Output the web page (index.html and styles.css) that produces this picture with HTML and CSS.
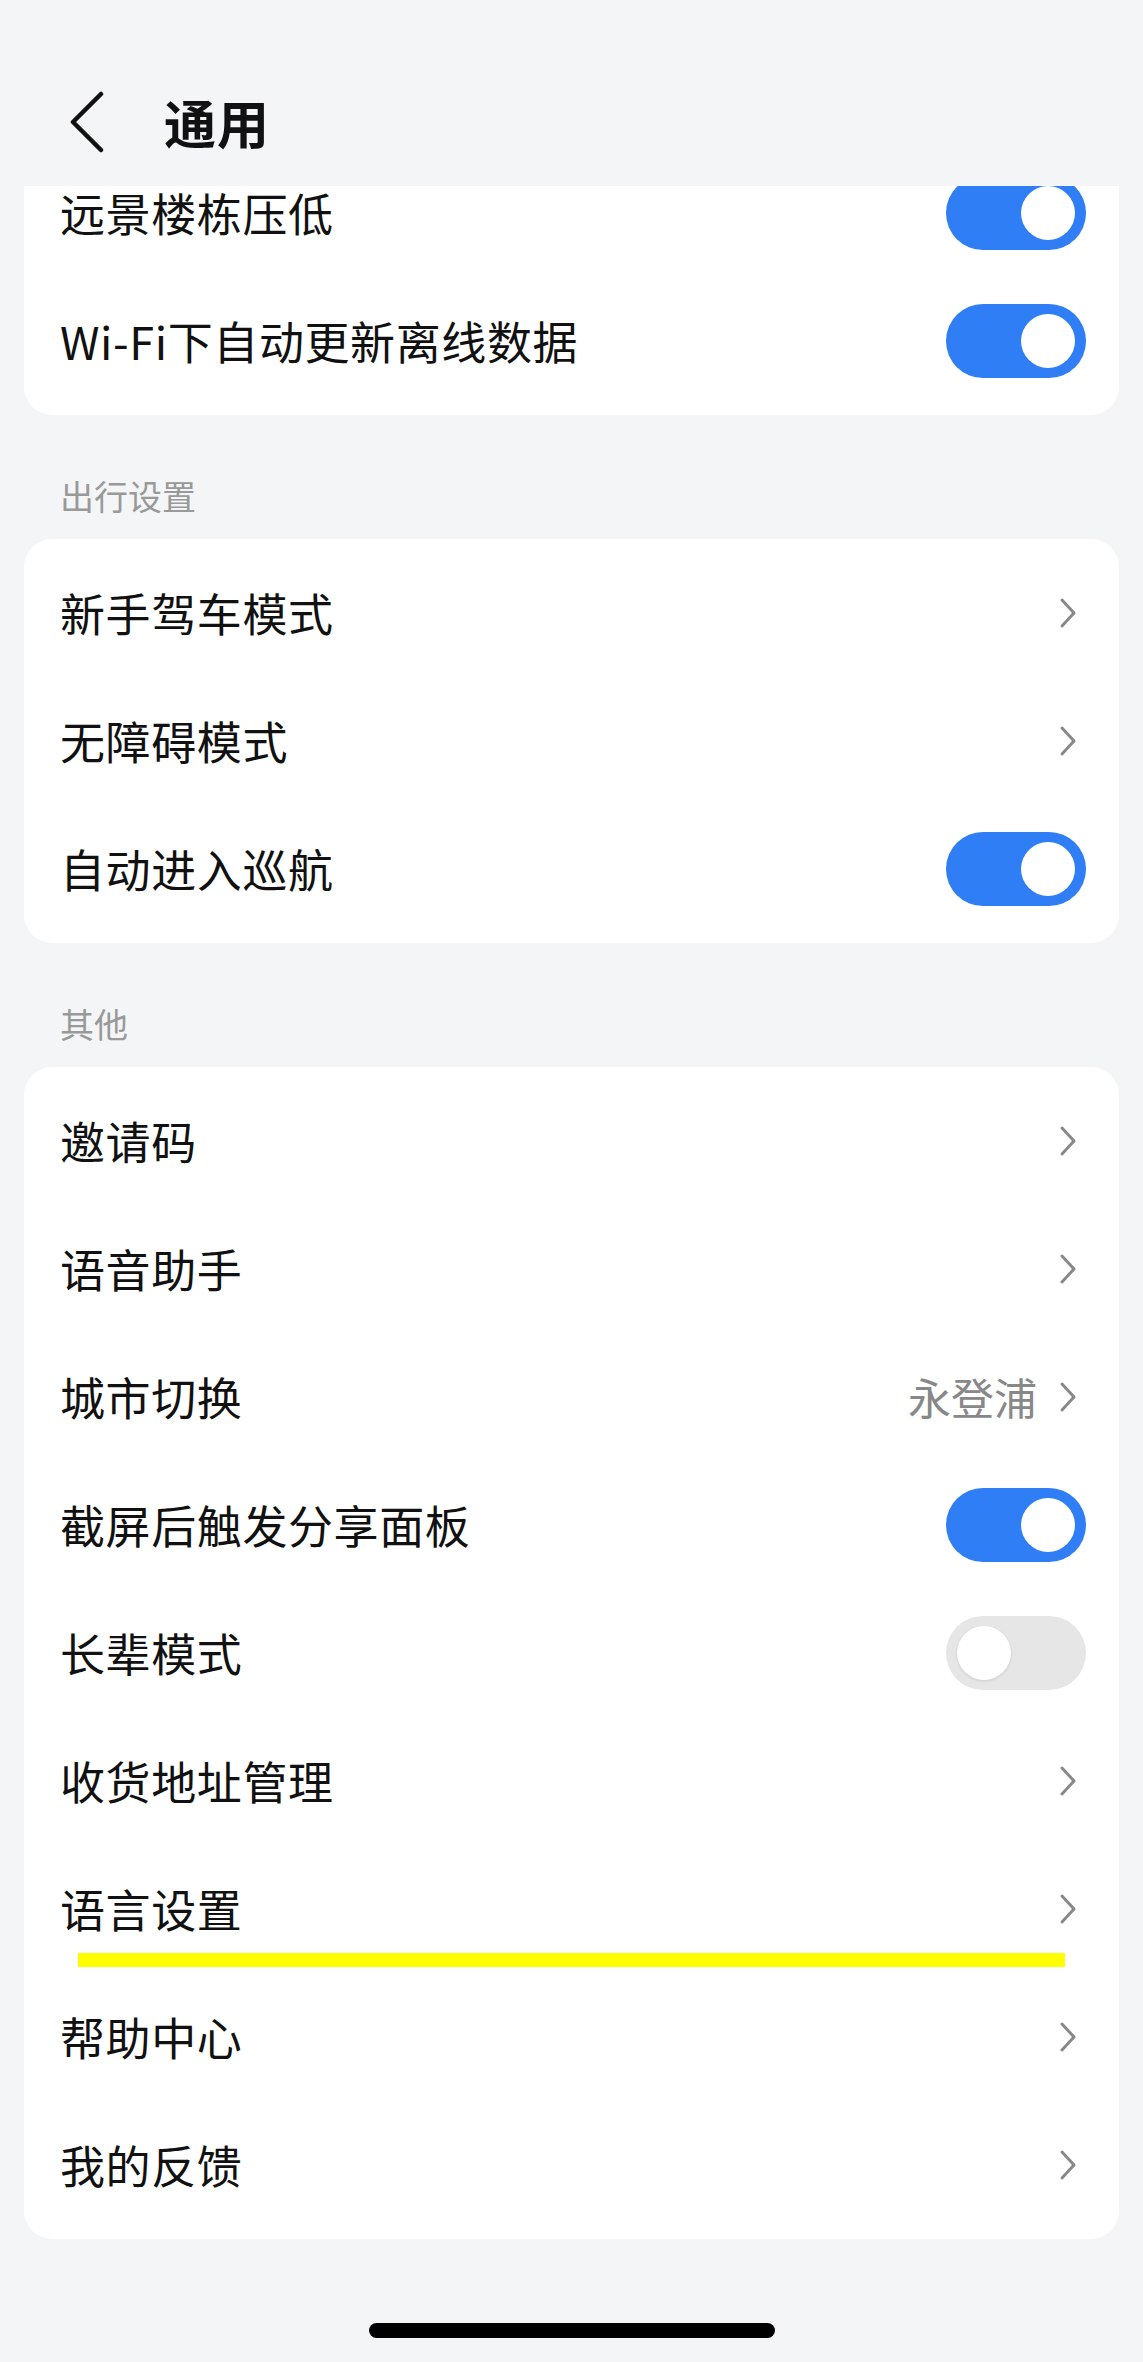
FILE: index.html
```html
<!DOCTYPE html>
<html lang="zh-CN">
<head>
    <meta charset="UTF-8">
    <meta name="viewport" content="width=device-width, initial-scale=1.0">
    <title>通用</title>
    <link rel="stylesheet" href="styles.css">
</head>
<body>
    <div class="screen">
        <!-- Top bar -->
        <div class="top-bar">
            <svg class="back-icon" width="40" height="62" viewBox="0 0 40 62">
                <path d="M33 3 L5 31 L33 59" fill="none" stroke="#111" stroke-width="4.5" stroke-linecap="round" stroke-linejoin="round"/>
            </svg>
            <h1 class="page-title">通用</h1>
        </div>

        <!-- Scrolled content -->
        <div class="content">
            <div class="content-inner">
                <div class="card">
                    <div class="row">
                        <span class="row-label">远景楼栋压低</span>
                        <span class="switch on"><span class="knob"></span></span>
                    </div>
                    <div class="row">
                        <span class="row-label">Wi-Fi下自动更新离线数据</span>
                        <span class="switch on"><span class="knob"></span></span>
                    </div>
                </div>

                <div class="section-title">出行设置</div>
                <div class="card">
                    <div class="row">
                        <span class="row-label">新手驾车模式</span>
                        <svg class="arrow" width="18" height="32" viewBox="0 0 18 32"><path d="M3 3 L15 16 L3 29" fill="none" stroke="#888" stroke-width="3" stroke-linecap="round" stroke-linejoin="round"/></svg>
                    </div>
                    <div class="row">
                        <span class="row-label">无障碍模式</span>
                        <svg class="arrow" width="18" height="32" viewBox="0 0 18 32"><path d="M3 3 L15 16 L3 29" fill="none" stroke="#888" stroke-width="3" stroke-linecap="round" stroke-linejoin="round"/></svg>
                    </div>
                    <div class="row">
                        <span class="row-label">自动进入巡航</span>
                        <span class="switch on"><span class="knob"></span></span>
                    </div>
                </div>

                <div class="section-title">其他</div>
                <div class="card">
                    <div class="row">
                        <span class="row-label">邀请码</span>
                        <svg class="arrow" width="18" height="32" viewBox="0 0 18 32"><path d="M3 3 L15 16 L3 29" fill="none" stroke="#888" stroke-width="3" stroke-linecap="round" stroke-linejoin="round"/></svg>
                    </div>
                    <div class="row">
                        <span class="row-label">语音助手</span>
                        <svg class="arrow" width="18" height="32" viewBox="0 0 18 32"><path d="M3 3 L15 16 L3 29" fill="none" stroke="#888" stroke-width="3" stroke-linecap="round" stroke-linejoin="round"/></svg>
                    </div>
                    <div class="row">
                        <span class="row-label">城市切换</span>
                        <span class="row-value">永登浦</span>
                        <svg class="arrow" width="18" height="32" viewBox="0 0 18 32"><path d="M3 3 L15 16 L3 29" fill="none" stroke="#888" stroke-width="3" stroke-linecap="round" stroke-linejoin="round"/></svg>
                    </div>
                    <div class="row">
                        <span class="row-label">截屏后触发分享面板</span>
                        <span class="switch on"><span class="knob"></span></span>
                    </div>
                    <div class="row">
                        <span class="row-label">长辈模式</span>
                        <span class="switch"><span class="knob"></span></span>
                    </div>
                    <div class="row">
                        <span class="row-label">收货地址管理</span>
                        <svg class="arrow" width="18" height="32" viewBox="0 0 18 32"><path d="M3 3 L15 16 L3 29" fill="none" stroke="#888" stroke-width="3" stroke-linecap="round" stroke-linejoin="round"/></svg>
                    </div>
                    <div class="row">
                        <span class="row-label">语言设置</span>
                        <svg class="arrow" width="18" height="32" viewBox="0 0 18 32"><path d="M3 3 L15 16 L3 29" fill="none" stroke="#888" stroke-width="3" stroke-linecap="round" stroke-linejoin="round"/></svg>
                        <span class="highlight-line"></span>
                    </div>
                    <div class="row">
                        <span class="row-label">帮助中心</span>
                        <svg class="arrow" width="18" height="32" viewBox="0 0 18 32"><path d="M3 3 L15 16 L3 29" fill="none" stroke="#888" stroke-width="3" stroke-linecap="round" stroke-linejoin="round"/></svg>
                    </div>
                    <div class="row">
                        <span class="row-label">我的反馈</span>
                        <svg class="arrow" width="18" height="32" viewBox="0 0 18 32"><path d="M3 3 L15 16 L3 29" fill="none" stroke="#888" stroke-width="3" stroke-linecap="round" stroke-linejoin="round"/></svg>
                    </div>
                </div>
            </div>
        </div>

        <!-- Home indicator -->
        <div class="home-area">
            <div class="home-bar"></div>
        </div>
    </div>
</body>
</html>
```

FILE: styles.css
```css
/* General page */
body {
    margin: 0;
    font-family: "Noto Sans CJK SC", "Noto Sans", sans-serif;
    background-color: #f4f5f7;
    color: #111;
}
.screen {
    display: flex;
    flex-direction: column;
    height: 100vh;
    overflow: hidden;
}

/* Top bar */
.top-bar {
    display: flex;
    align-items: center;
    height: 128px;
    padding-top: 58px;
    flex-shrink: 0;
    background-color: #f4f5f7;
}
.back-icon {
    margin-left: 68px;
}
.page-title {
    margin: 0 0 0 56px;
    font-size: 52px;
    font-weight: 700;
    line-height: 1;
    letter-spacing: 1px;
}

/* Scroll area */
.content {
    flex: 1;
    overflow: hidden;
}
.content-inner {
    margin-top: -47px;
    padding: 0 24px;
}
.card {
    background-color: #fff;
    border-radius: 28px;
    padding: 10px 0;
}
.section-title {
    padding: 58px 36px 20px;
    font-size: 34px;
    line-height: 46px;
    color: #999;
}

/* Rows */
.row {
    position: relative;
    display: flex;
    align-items: center;
    height: 128px;
    padding: 0 33px 0 36px;
}
.row-label {
    flex: 1;
    font-size: 45px;
    line-height: 1.1;
    letter-spacing: 0.6px;
    white-space: nowrap;
}
.row-value {
    font-size: 43px;
    line-height: 1.1;
    color: #888;
    margin-right: 22px;
}
.arrow {
    margin-right: 9px;
}

/* Switches */
.switch {
    display: flex;
    align-items: center;
    width: 140px;
    height: 74px;
    padding: 0 11px;
    box-sizing: border-box;
    border-radius: 37px;
    background-color: #e6e6e6;
}
.switch .knob {
    width: 54px;
    height: 54px;
    border-radius: 50%;
    background-color: #fff;
    box-shadow: 0 1px 3px rgba(0, 0, 0, 0.12);
}
.switch.on {
    justify-content: flex-end;
    background-color: #2f7ef5;
}
.switch.on .knob {
    box-shadow: none;
}

/* Annotation stroke */
.highlight-line {
    position: absolute;
    left: 54px;
    top: 108px;
    width: 987px;
    height: 14px;
    background-color: #ffff00;
}

/* Home indicator */
.home-area {
    display: flex;
    justify-content: center;
    height: 123px;
    flex-shrink: 0;
}
.home-bar {
    width: 406px;
    height: 15px;
    margin-top: 84px;
    border-radius: 8px;
    background-color: #000;
}
```
